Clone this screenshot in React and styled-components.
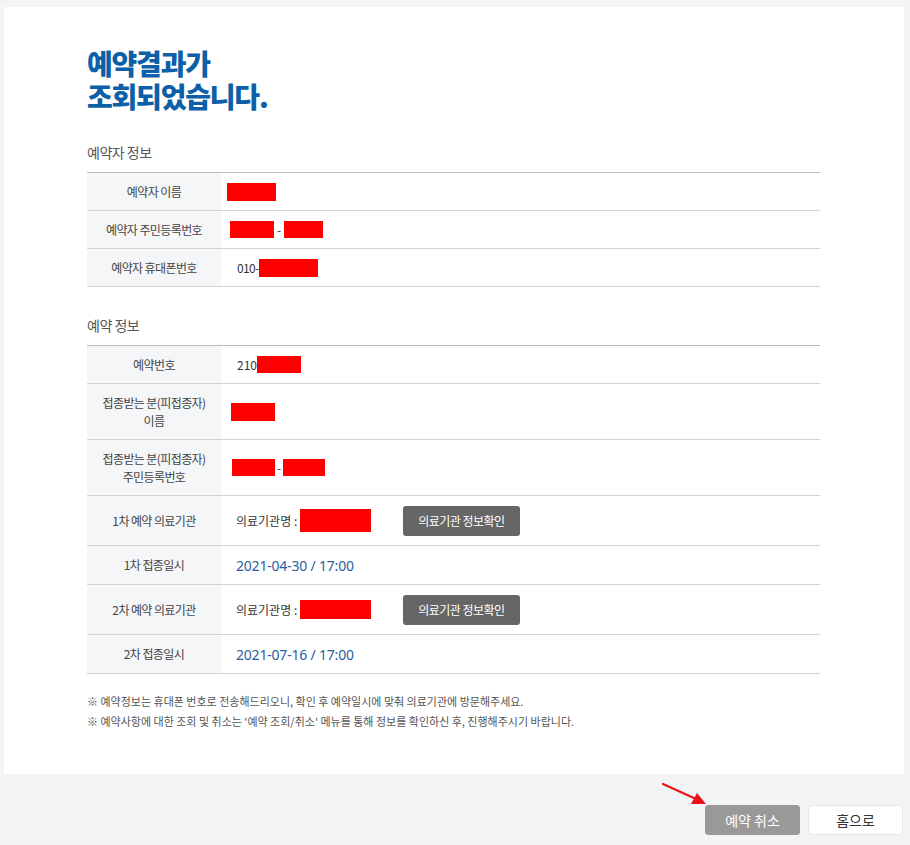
import React from "react";
import styled, { createGlobalStyle } from "styled-components";

const Global = createGlobalStyle`
  html, body { margin: 0; padding: 0; background: #f3f4f6; }
  body { font-family: "Noto Sans CJK KR", "Noto Sans", sans-serif; color: #333; }
`;

const Page = styled.div`
  position: relative;
  min-height: 845px;
  padding: 7px 6px 10px 4px;
  box-sizing: border-box;
`;

const Card = styled.section`
  background: #fff;
  padding: 40px 84px 43px 83px;
`;

const Title = styled.h1`
  margin: 0 0 29px;
  font-size: 28px;
  line-height: 33px;
  font-weight: 900;
  letter-spacing: -1.2px;
  color: #0d5fa8;
`;

const TitleLine = styled.span`
  display: block;
  height: 33px;
`;

const SectionTitle = styled.h2`
  margin: ${(p) => (p.$first ? "0" : "28px")} 0 10px;
  font-size: 14px;
  line-height: 20px;
  font-weight: 400;
  color: #555;
  letter-spacing: -0.5px;
`;

const Table = styled.div`
  border-top: 1px solid #bdbdbd;
`;

const Row = styled.div`
  display: grid;
  grid-template-columns: 134px 1fr;
  border-bottom: 1px solid #d4d4d4;
`;

const Label = styled.div`
  background: #f5f6f8;
  display: flex;
  align-items: center;
  justify-content: center;
  text-align: center;
  padding: 9.5px 8px;
  font-size: 12px;
  line-height: 18px;
  color: #444;
  letter-spacing: -0.6px;
`;

const Value = styled.div`
  display: flex;
  align-items: center;
  padding: 9.5px 10px 9.5px ${(p) => p.$indent}px;
  font-size: 12px;
  color: #333;
`;

const Redact = styled.span`
  display: inline-block;
  background: #ff0000;
  width: ${(p) => p.$w}px;
  height: ${(p) => p.$h || 18}px;
`;

const Dash = styled.span`
  margin: 0 ${(p) => p.$gap || 5}px;
  font-size: 12px;
`;

const Text = styled.span`
  font-size: 12px;
  color: #333;
  letter-spacing: ${(p) => (p.$tight ? "-0.6px" : "0")};
`;

const DateText = styled.span`
  font-family: "Noto Sans", sans-serif;
  font-size: 14px;
  color: #2a5f9c;
  letter-spacing: -0.2px;
`;

const InfoButton = styled.button`
  margin-left: 32px;
  width: 117px;
  height: 30px;
  border: 0;
  border-radius: 3px;
  background: #666;
  color: #fff;
  font-family: inherit;
  font-size: 12px;
  letter-spacing: -0.5px;
  cursor: pointer;
`;

const Notes = styled.div`
  margin-top: 17px;
  font-size: 11px;
  line-height: 20px;
  color: #555;
  letter-spacing: 0;
`;

const Actions = styled.div`
  display: flex;
  justify-content: flex-end;
  gap: 8px;
  margin-top: 31px;
  padding-right: 1px;
`;

const ActionButton = styled.button`
  width: 95px;
  height: 30px;
  border-radius: 3px;
  font-family: inherit;
  font-size: 14px;
  cursor: pointer;
  border: 1px solid ${(p) => (p.$primary ? "#999" : "#e6e7ea")};
  background: ${(p) => (p.$primary ? "#999" : "#fff")};
  color: ${(p) => (p.$primary ? "#fff" : "#333")};
`;

const Arrow = styled.svg`
  position: absolute;
  left: 660px;
  top: 780px;
  width: 50px;
  height: 28px;
`;

export default function App() {
  return (
    <>
      <Global />
      <Page>
        <Card>
          <Title>
            <TitleLine>예약결과가</TitleLine>
            <TitleLine>조회되었습니다.</TitleLine>
          </Title>

          <SectionTitle $first>예약자 정보</SectionTitle>
          <Table>
            <Row>
              <Label>예약자 이름</Label>
              <Value $indent={6}>
                <Redact $w={49} $h={18} />
              </Value>
            </Row>
            <Row>
              <Label>예약자 주민등록번호</Label>
              <Value $indent={9}>
                <Redact $w={44} $h={17} />
                <Dash $gap={3}>-</Dash>
                <Redact $w={39} $h={17} />
              </Value>
            </Row>
            <Row>
              <Label>예약자 휴대폰번호</Label>
              <Value $indent={16}>
                <Text $tight>010-</Text>
                <Redact $w={59} $h={18} />
              </Value>
            </Row>
          </Table>

          <SectionTitle>예약 정보</SectionTitle>
          <Table>
            <Row>
              <Label>예약번호</Label>
              <Value $indent={16}>
                <Text>210</Text>
                <Redact $w={44} $h={17} />
              </Value>
            </Row>
            <Row>
              <Label>
                접종받는 분(피접종자)
                <br />
                이름
              </Label>
              <Value $indent={10}>
                <Redact $w={44} $h={18} />
              </Value>
            </Row>
            <Row>
              <Label>
                접종받는 분(피접종자)
                <br />
                주민등록번호
              </Label>
              <Value $indent={11}>
                <Redact $w={43} $h={17} />
                <Dash $gap={2}>-</Dash>
                <Redact $w={42} $h={17} />
              </Value>
            </Row>
            <Row>
              <Label>1차 예약 의료기관</Label>
              <Value $indent={15}>
                <Text>의료기관명 :&nbsp;</Text>
                <Redact $w={71} $h={23} />
                <InfoButton>의료기관 정보확인</InfoButton>
              </Value>
            </Row>
            <Row>
              <Label>1차 접종일시</Label>
              <Value $indent={15}>
                <DateText>2021-04-30 / 17:00</DateText>
              </Value>
            </Row>
            <Row>
              <Label>2차 예약 의료기관</Label>
              <Value $indent={15}>
                <Text>의료기관명 :&nbsp;</Text>
                <Redact $w={71} $h={19} />
                <InfoButton>의료기관 정보확인</InfoButton>
              </Value>
            </Row>
            <Row>
              <Label>2차 접종일시</Label>
              <Value $indent={15}>
                <DateText>2021-07-16 / 17:00</DateText>
              </Value>
            </Row>
          </Table>

          <Notes>
            <div>※ 예약정보는 휴대폰 번호로 전송해드리오니, 확인 후 예약일시에 맞춰 의료기관에 방문해주세요.</div>
            <div>※ 예약사항에 대한 조회 및 취소는 '예약 조회/취소' 메뉴를 통해 정보를 확인하신 후, 진행해주시기 바랍니다.</div>
          </Notes>
        </Card>

        <Actions>
          <ActionButton $primary>예약 취소</ActionButton>
          <ActionButton>홈으로</ActionButton>
        </Actions>

        <Arrow viewBox="0 0 50 28">
          <line x1="3" y1="4" x2="36" y2="19" stroke="#e8141b" strokeWidth="2.2" strokeLinecap="round" />
          <polygon points="46,24 31,24 37,13" fill="#e8141b" />
        </Arrow>
      </Page>
    </>
  );
}
